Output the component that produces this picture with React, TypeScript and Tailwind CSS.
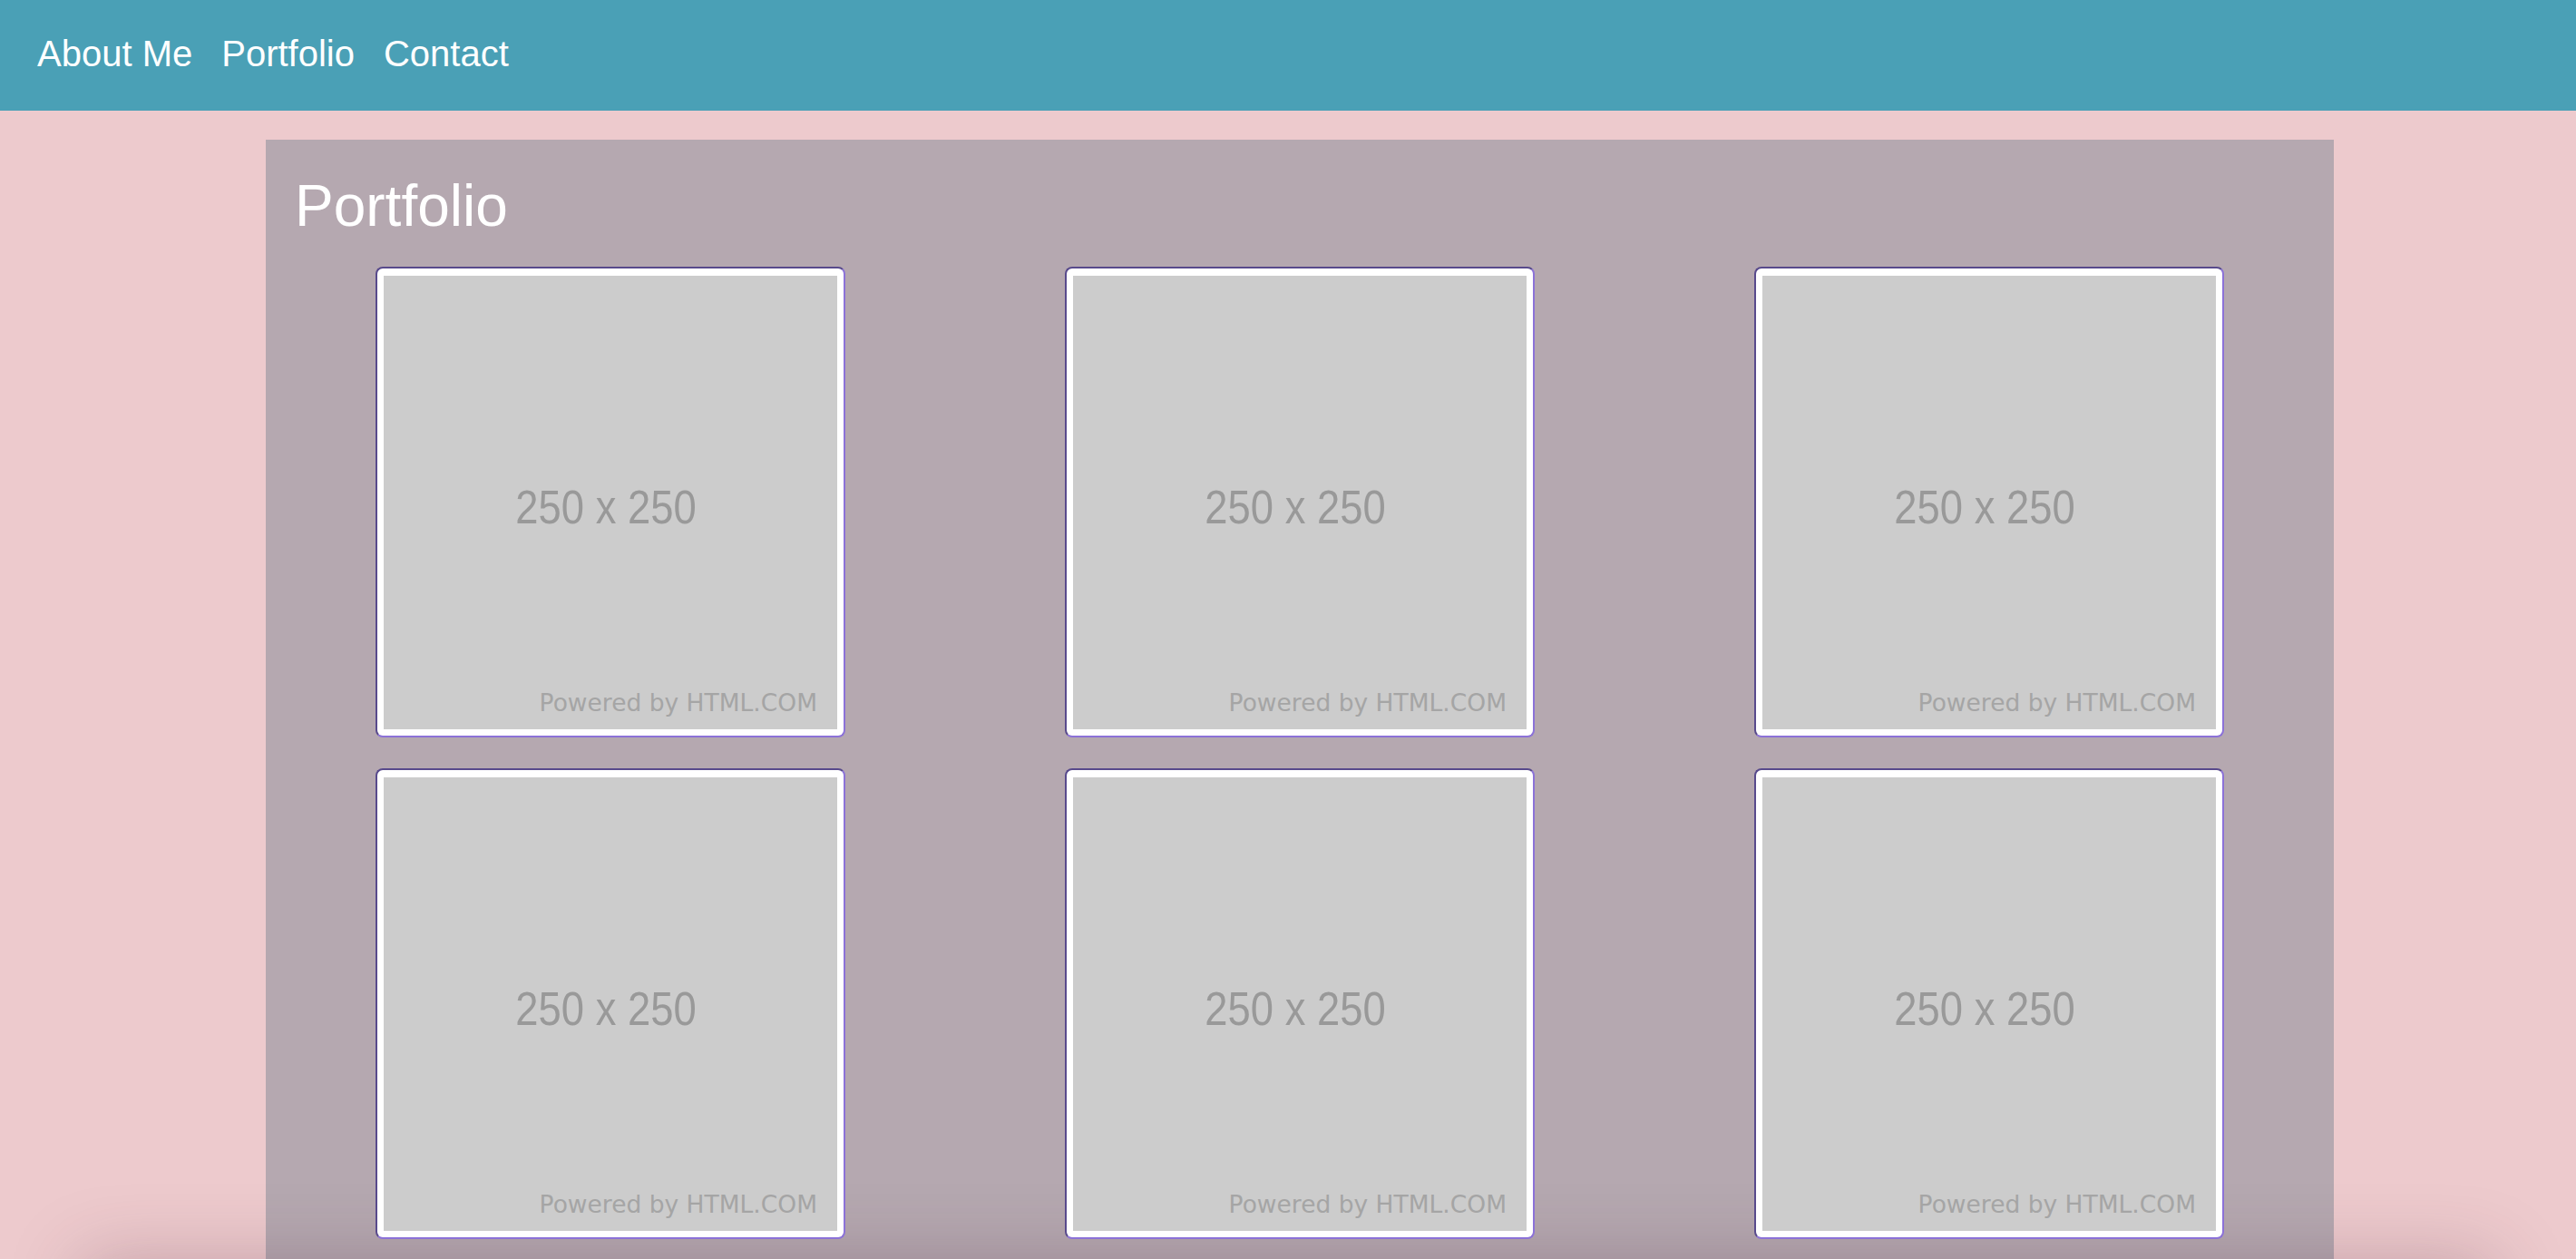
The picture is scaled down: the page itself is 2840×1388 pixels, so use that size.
import React from "react";

function Card() {
  return (
    <div className="w-[518px] h-[519px] bg-white rounded-[8px] border-2 border-t-[#584a8c] border-l-[#584a8c] border-r-[#8c72d8] border-b-[#8c72d8] pt-[8px] pb-[7px] px-[7px]">
      <div className="relative w-[500px] h-[500px] bg-[#cccccc] flex items-center justify-center">
        <span className="inline-block mt-[10px] mr-[10px] scale-x-[0.89] text-[51px] leading-[59px] text-[#999999] font-['Liberation_Sans',Arial,sans-serif]">
          250 x 250
        </span>
        <span className="absolute right-[22px] bottom-[14px] text-[26.5px] leading-[30px] text-[#a5a5a5] font-['DejaVu_Sans',Verdana,sans-serif]">
          Powered by HTML.COM
        </span>
      </div>
    </div>
  );
}

export default function App() {
  const cards = [0, 1, 2, 3, 4, 5];
  return (
    <div className="min-h-screen w-full bg-[#edcacd] font-['Liberation_Sans',Arial,sans-serif] overflow-hidden">
      <nav className="h-[122px] bg-[#4aa0b6] flex items-start pl-[41px] pt-[36px] gap-[32px] text-[40px] leading-[46px] text-white">
        <a>About Me</a>
        <a>Portfolio</a>
        <a>Contact</a>
      </nav>
      <main className="pt-[32px]">
        <section className="ml-[293px] w-[2280px] bg-[#b5a8b0] pt-[36px] pb-[32px]">
          <h2 className="pl-[32px] text-[64px] leading-[74px] text-white">Portfolio</h2>
          <div className="mt-[30px] grid grid-cols-3 justify-items-center gap-y-[34px]">
            {cards.map((i) => (
              <Card key={i} />
            ))}
          </div>
        </section>
        <footer className="mx-[100px] h-[100px] shadow-[0_0_80px_10px_rgba(80,40,60,0.25)]" />
      </main>
    </div>
  );
}
